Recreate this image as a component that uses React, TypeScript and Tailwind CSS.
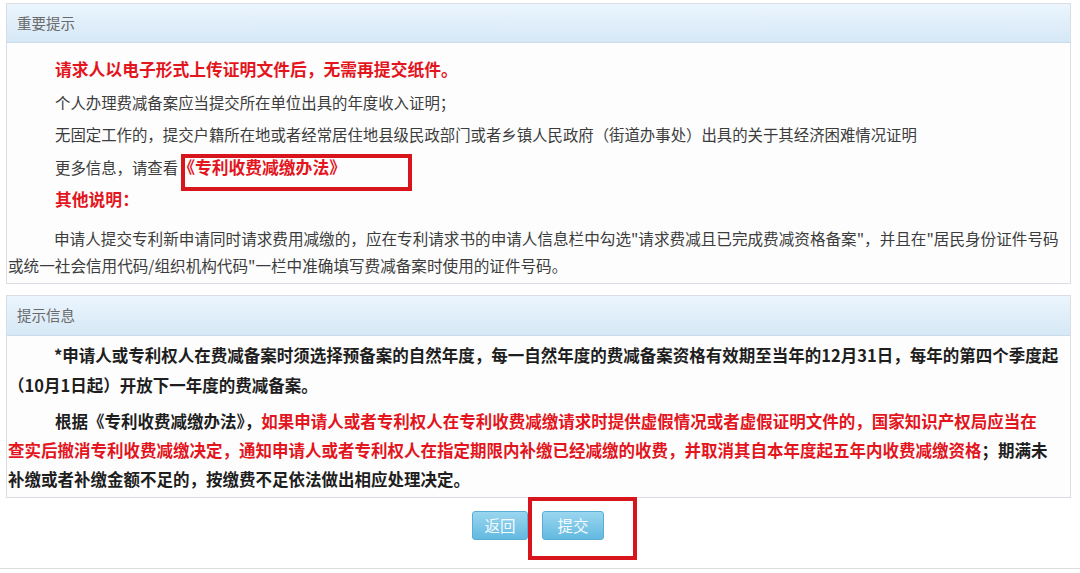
import React from "react";

const font = { fontFamily: '"Noto Sans CJK SC", "Noto Sans", sans-serif' };

export default function App() {
  return (
    <div
      className="relative w-[1080px] h-[573px] overflow-hidden bg-white pt-[3px]"
      style={font}
    >
      {/* Panel 1 */}
      <div className="ml-[6px] w-[1065px] border border-[#d9dee4] bg-[#fdfdfd]">
        <div className="flex h-[39px] items-center border-b border-[#cadcec] bg-gradient-to-b from-[#ebf5fd] to-[#d6e8f6] pl-[10px] text-[14.5px] text-[#6a6a6a]">
          重要提示
        </div>
        <div className="pt-[10px] pb-[4px] pl-[1px] whitespace-nowrap">
          <div className="pl-[47px] text-[16.8px] font-bold leading-[32.5px] text-[#e3151d]">
            请求人以电子形式上传证明文件后，无需再提交纸件。
          </div>
          <div className="pl-[47px] text-[15.4px] leading-[32.5px] text-[#3c3c3c]">
            个人办理费减备案应当提交所在单位出具的年度收入证明；
          </div>
          <div className="pl-[47px] text-[15.4px] leading-[32.5px] text-[#3c3c3c]">
            无固定工作的，提交户籍所在地或者经常居住地县级民政部门或者乡镇人民政府（街道办事处）出具的关于其经济困难情况证明
          </div>
          <div className="pl-[47px] text-[15.4px] leading-[32.5px] text-[#3c3c3c]">
            更多信息，请查看
            <span className="text-[16.8px] font-bold text-[#e3151d]">《专利收费减缴办法》</span>
          </div>
          <div className="pl-[47px] text-[16.8px] font-bold leading-[32.5px] text-[#e3151d]">
            其他说明：
          </div>
          <div className="mt-[9px] text-[15.6px] leading-[27px] text-[#3c3c3c]">
            <div className="pl-[46px]">
              申请人提交专利新申请同时请求费用减缴的，应在专利请求书的申请人信息栏中勾选"请求费减且已完成费减资格备案"，并且在"居民身份证件号码
            </div>
            <div>或统一社会信用代码/组织机构代码"一栏中准确填写费减备案时使用的证件号码。</div>
          </div>
        </div>
      </div>

      {/* Panel 2 */}
      <div className="mt-[11px] ml-[6px] w-[1065px] border border-[#d9dee4] bg-[#fdfdfd]">
        <div className="flex h-[40px] items-center border-b border-[#cadcec] bg-gradient-to-b from-[#ebf5fd] to-[#d6e8f6] pl-[10px] text-[14.5px] text-[#6a6a6a]">
          提示信息
        </div>
        <div className="pt-[4px] pb-[3px] pl-[1px] whitespace-nowrap text-[16.5px] font-bold text-[#1e1e1e]">
          <div className="leading-[30px]">
            <div className="pl-[46px]">
              *申请人或专利权人在费减备案时须选择预备案的自然年度，每一自然年度的费减备案资格有效期至当年的12月31日，每年的第四个季度起
            </div>
            <div>（10月1日起）开放下一年度的费减备案。</div>
          </div>
          <div className="mt-[7.5px] leading-[29px]">
            <div className="pl-[47px]">
              根据《专利收费减缴办法》，
              <span className="text-[#e3151d]">
                如果申请人或者专利权人在专利收费减缴请求时提供虚假情况或者虚假证明文件的，国家知识产权局应当在
              </span>
            </div>
            <div>
              <span className="text-[#e3151d]">
                查实后撤消专利收费减缴决定，通知申请人或者专利权人在指定期限内补缴已经减缴的收费，并取消其自本年度起五年内收费减缴资格
              </span>
              ；期满未
            </div>
            <div>补缴或者补缴金额不足的，按缴费不足依法做出相应处理决定。</div>
          </div>
        </div>
      </div>

      {/* Buttons */}
      <div className="mt-[13px] flex justify-center gap-[14px] pr-[4px]">
        <button className="h-[29px] w-[56px] rounded-[3px] border border-[#5aaed3] bg-gradient-to-b from-[#9ad6ef] to-[#62b9e0] text-[15.5px] text-[#f4fbff]">
          返回
        </button>
        <button className="h-[29px] w-[62px] rounded-[3px] border border-[#5aaed3] bg-gradient-to-b from-[#9ad6ef] to-[#62b9e0] text-[15.5px] text-[#f4fbff]">
          提交
        </button>
      </div>
      <div className="mt-[28px] border-t border-[#dcdcdc]" />

      {/* Red highlight boxes */}
      <div className="absolute left-[181px] top-[154px] h-[37px] w-[231px] border-[4px] border-[#d8141c]" />
      <div className="absolute left-[528px] top-[497px] h-[63px] w-[109px] border-[4px] border-[#d8141c]" />
    </div>
  );
}
